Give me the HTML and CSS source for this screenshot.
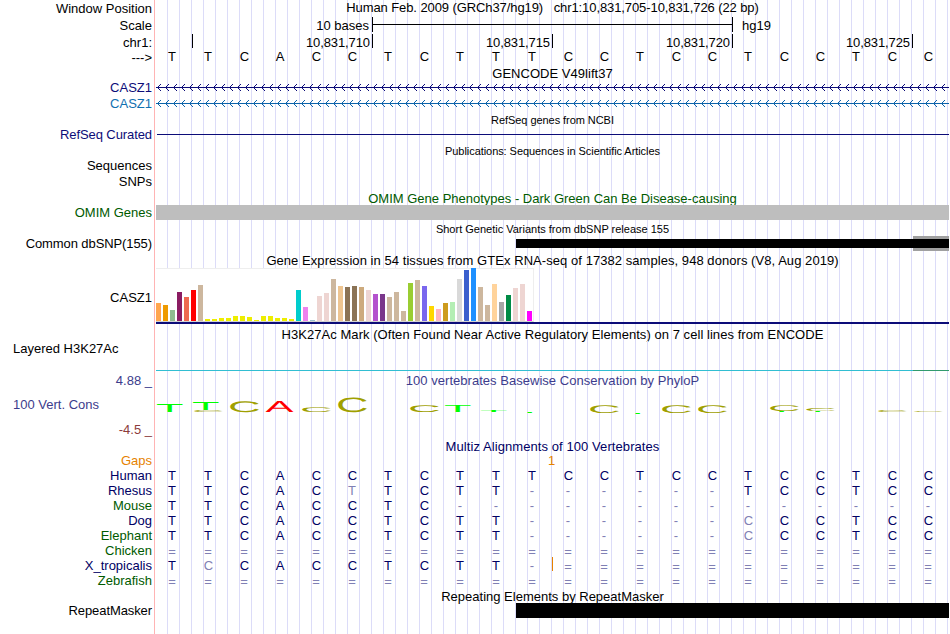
FILE: index.html
```html
<!DOCTYPE html>
<html lang="en">
<head>
<meta charset="utf-8">
<title>Genome Browser hg19 chr1:10,831,705-10,831,726</title>
<link rel="stylesheet" href="styles.css">
</head>
<body>
<main class="browser">
  <div class="row h16"><div class="label low">Window Position</div><div class="track title"><span class="t-pos">Human Feb. 2009 (GRCh37/hg19) &nbsp; chr1:10,831,705-10,831,726 (22 bp)</span></div></div>
  <div class="row h17"><div class="label low">Scale</div><div class="track scale"><span class="scale-text">10 bases</span><span class="ruler"></span><span class="assembly">hg19</span></div></div>
  <div class="row h17"><div class="label low">chr1:</div><div class="track coords"><span class="c-first"></span><span>10,831,710</span><span>10,831,715</span><span>10,831,720</span><span>10,831,725</span></div></div>
  <div class="row h16"><div class="label">---&gt;</div><div class="track seq plain" data-seq="TTCACCTCTTTCCTCCTCCTCC"></div></div>

  <div class="row h14"><div class="label"></div><div class="track title low"><span class="t-gencode">GENCODE V49lift37</span></div></div>
  <div class="row h16 gene"><div class="label">CASZ1</div><div class="track"><svg class="intron" width="793" height="16"><defs><pattern id="arrow" width="8" height="16" patternUnits="userSpaceOnUse"><path d="M1 7h1v1h-1zM2 6h1v1h-1zM2 8h1v1h-1zM3 5h1v1h-1zM3 9h1v1h-1zM4 4h1v1h-1zM4 10h1v1h-1z" fill="#0c0c78"/></pattern></defs><rect width="793" height="16" fill="url(#arrow)"/><rect y="7" width="793" height="1" fill="#0c0c78"/></svg></div></div>
  <div class="row h16 gene-alt"><div class="label">CASZ1</div><div class="track"><svg class="intron" width="793" height="16"><defs><pattern id="arrow-alt" width="8" height="16" patternUnits="userSpaceOnUse"><path d="M1 7h1v1h-1zM2 6h1v1h-1zM2 8h1v1h-1zM3 5h1v1h-1zM3 9h1v1h-1zM4 4h1v1h-1zM4 10h1v1h-1z" fill="#0c64aa"/></pattern></defs><rect width="793" height="16" fill="url(#arrow-alt)"/><rect y="7" width="793" height="1" fill="#0c64aa"/></svg></div></div>

  <div class="row h15"><div class="label"></div><div class="track title small low"><span class="t-refseq">RefSeq genes from NCBI</span></div></div>
  <div class="row h16 gene"><div class="label tight">RefSeq Curated</div><div class="track"><div class="refseq-line"></div></div></div>

  <div class="row h15"><div class="label"></div><div class="track title small low"><span class="t-pubs">Publications: Sequences in Scientific Articles</span></div></div>
  <div class="row h16"><div class="label">Sequences</div><div class="track"></div></div>
  <div class="row h16"><div class="label">SNPs</div><div class="track"></div></div>

  <div class="row h15 green"><div class="label"></div><div class="track title low"><span class="t-omim">OMIM Gene Phenotypes - Dark Green Can Be Disease-causing</span></div></div>
  <div class="row h15 green"><div class="label">OMIM Genes</div><div class="track"><div class="omim-bar"></div></div></div>

  <div class="row h16"><div class="label"></div><div class="track title small low"><span class="t-snp">Short Genetic Variants from dbSNP release 155</span></div></div>
  <div class="row h16"><div class="label tight">Common dbSNP(155)</div><div class="track snp"><div class="snp-long"></div><div class="snp-edge"><i></i></div></div></div>

  <div class="row h15"><div class="label"></div><div class="track title low"><span class="t-gtex">Gene Expression in 54 tissues from GTEx RNA-seq of 17382 samples, 948 donors (V8, Aug 2019)</span></div></div>
  <div class="row h58"><div class="label gtex-label">CASZ1</div><div class="track gtex"><div class="bars" id="bars"></div><div class="gene-line"></div></div></div>

  <div class="row h16"><div class="label"></div><div class="track title lower"><span class="t-h3k">H3K27Ac Mark (Often Found Near Active Regulatory Elements) on 7 cell lines from ENCODE</span></div></div>
  <div class="row h31"><div class="label left">Layered H3K27Ac</div><div class="track signal"><div class="signal-a"></div><div class="signal-b"></div></div></div>

  <div class="row h67 cons">
    <div class="label cons-labels"><span class="max">4.88 _</span><span class="name">100 Vert. Cons</span><span class="min">-4.5 _</span></div>
    <div class="track"><div class="title cons-title"><span class="t-phylo">100 vertebrates Basewise Conservation by PhyloP</span></div><svg class="logo" id="logo" width="793" height="50"></svg></div>
  </div>

  <div class="row h15 multiz"><div class="label"></div><div class="track title"><span class="t-multiz">Multiz Alignments of 100 Vertebrates</span></div></div>
  <div class="row h14 gaps"><div class="label">Gaps</div><div class="track"><span class="gap-count">1</span></div></div>
  <div class="row h15 multiz"><div class="label">Human</div><div class="track seq" data-seq="TTCACCTCTTTCCTCCTCCTCC"></div></div>
  <div class="row h15 multiz"><div class="label">Rhesus</div><div class="track seq" data-seq="TTCACtTCTT------TCCTCC"></div></div>
  <div class="row h15 multiz"><div class="label green">Mouse</div><div class="track seq" data-seq="TTCACCTC--------------"></div></div>
  <div class="row h15 multiz"><div class="label">Dog</div><div class="track seq" data-seq="TTCACCTCTT------cCCTCC"></div></div>
  <div class="row h15 multiz"><div class="label green">Elephant</div><div class="track seq" data-seq="TTCACCTCTT------cCCTCC"></div></div>
  <div class="row h15 multiz"><div class="label green">Chicken</div><div class="track seq" data-seq="======================"></div></div>
  <div class="row h15 multiz"><div class="label">X_tropicalis</div><div class="track seq insertion" data-seq="TcCACCTCTT-==========="></div></div>
  <div class="row h15 multiz"><div class="label green">Zebrafish</div><div class="track seq" data-seq="======================"></div></div>

  <div class="row h15"><div class="label"></div><div class="track title low"><span class="t-rmsk">Repeating Elements by RepeatMasker</span></div></div>
  <div class="row h15"><div class="label tight">RepeatMasker</div><div class="track"><div class="repeat-bar"></div></div></div>
  <div class="row h16"><div class="label"></div><div class="track"></div></div>
</main>
<script src="tracks.js"></script>
</body>
</html>
```
FILE: styles.css
```css
* { box-sizing: border-box; }
body {
  margin: 0;
  background: #fff;
  color: #000;
  font: 13px "Liberation Sans", Arial, sans-serif;
  overflow: hidden;
}
.browser { width: 949px; height: 634px; }
.row { display: grid; grid-template-columns: 155px 793px; column-gap: 1px; }
.label {
  border-right: 1px solid #ffb4b4;
  padding-right: 2px;
  text-align: right;
  white-space: pre;
}
.track {
  min-width: 0;
  background: repeating-linear-gradient(to right, transparent 0 11px, #dcdcf8 11px 12px);
}
.h14 { height: 14px; line-height: 14px; }
.h15 { height: 15px; line-height: 15px; }
.h16 { height: 16px; line-height: 16px; }
.h17 { height: 17px; line-height: 17px; }
.h31 { height: 31px; line-height: 15px; }
.h58 { height: 58px; line-height: 15px; }
.h67 { height: 67px; line-height: 15px; }

.title { display: flex; justify-content: center; white-space: nowrap; }
.small { font-size: 11px; }
.low { padding-top: 1px; }
.lower { padding-top: 2px; }
.tight { letter-spacing: -0.09px; }
.t-pos { letter-spacing: -0.09px; }
.t-refseq, .t-pubs { letter-spacing: -0.06px; }
.t-gencode, .t-phylo { letter-spacing: 0.03px; }
.t-gtex { letter-spacing: 0.055px; }
.t-h3k { letter-spacing: 0.05px; }
.t-multiz { letter-spacing: 0.08px; }

.gene { color: #0c0c78; }
.gene-alt { color: #1070b0; }
.green, .multiz .green { color: #005a00; }
.multiz { color: #000064; }
.gaps { color: #e68200; }
.cons { color: #3c3c8c; }

/* Scale bar and coordinates */
.scale { display: grid; grid-template-columns: 213px 3px 361px 9px auto; }
.scale-text, .assembly { padding-top: 1px; }
.scale-text { text-align: right; }
.ruler {
  grid-column: 3;
  height: 15px;
  margin-top: 1px;
  border: solid #000;
  border-width: 0 1px;
  background: linear-gradient(#000, #000) 0 7px / 100% 1px no-repeat;
}
.assembly { grid-column: 5; }
.coords { display: grid; grid-template-columns: 37px repeat(4, 180px); letter-spacing: -0.1px; }
.coords span {
  height: 14px;
  margin-top: 1px;
  padding-right: 2px;
  border-right: 1px solid #000;
  text-align: right;
}

/* One 36px cell per base */
.seq { display: flex; }
.seq span { flex: 0 0 36px; text-align: center; }
.seq span:first-child { margin-left: -2px; }
.seq .dim { color: #8080b4; }
.seq .wide { padding-left: 1px; }
.seq .match { padding-top: 1px; }
.plain { line-height: 14px; }
.insertion { position: relative; }
.insertion::after {
  content: "";
  position: absolute;
  left: 396px;
  top: -1px;
  width: 1px;
  height: 14px;
  background: #e68200;
}
.gap-count { display: block; margin-left: 392px; }

.intron { display: block; shape-rendering: crispEdges; }
.refseq-line { height: 1px; margin: 7px 0 0 1px; background: #0c0c78; }
.omim-bar { height: 15px; background: #bebebe; }
.snp { display: grid; grid-template-columns: 397px 36px; justify-content: end; }
.snp-long { height: 9px; margin-top: 3px; background: #000; }
.snp-edge { height: 15px; padding-top: 3px; background: #a0a0a0; }
.snp-edge i { display: block; height: 9px; background: #000; }
.repeat-bar { height: 15px; margin-left: 360px; background: #000; }

/* Tissue expression */
.gtex-label { padding-top: 23px; }
.gtex { padding-top: 1px; }
.bars {
  display: flex;
  align-items: flex-end;
  gap: 2px;
  width: 378px;
  height: 54px;
  border: solid #eee;
  border-width: 1px 1px 1px 0;
  border-bottom-color: #d2d2d2;
  background: #fff;
}
.bars i { flex: 0 0 5px; }
.gene-line { height: 2px; background: #0c0c78; }

.left { padding-left: 13px; text-align: left; }
.signal { display: grid; grid-template-columns: 757px 36px; align-items: end; padding-bottom: 1px; }
.signal-a { height: 1px; background: #32bed2; }
.signal-b { height: 1px; background: #329b6e; }
.cons-labels { display: flex; flex-direction: column; }
.max { padding-top: 1px; }
.name { padding: 9px 0 0 13px; text-align: left; }
.min { padding-top: 10px; color: #8c3c3c; }
.cons-title { height: 16px; line-height: 17px; }
.logo { display: block; }
.logo text { font: 100px "Liberation Sans", Arial, sans-serif; text-rendering: geometricPrecision; }
.A { fill: #f00; }
.C { fill: #a0a000; }
.T { fill: #0f0; }
```
FILE: tracks.js
```js
// Base letters: lower case marks a mismatch, drawn dimmed.
document.querySelectorAll('.seq').forEach(function (row) {
  row.dataset.seq.split('').forEach(function (c) {
    var cell = document.createElement('span');
    cell.textContent = c.toUpperCase();
    if (c === '=') cell.className = 'dim match';
    else if (c === 'C') cell.className = 'wide';
    else if (c === 'c') cell.className = 'dim wide';
    else if (!/[A-Z]/.test(c)) cell.className = 'dim';
    row.appendChild(cell);
  });
});

// Expression bars: colour and height in pixels.
var tissues = 'FFA54F:18 EE9A00:16 8FBC8F:11 8B1C62:29 EE6A50:24 FF0000:31 CDB79E:36 ' +
  'EEEE00:2 EEEE00:2 EEEE00:3 EEEE00:3 EEEE00:5 EEEE00:5 EEEE00:4 EEEE00:1 EEEE00:5 EEEE00:5 EEEE00:3 EEEE00:3 EEEE00:2 ' +
  '00CDCD:31 EE82EE:14 9AC0CD:1 EED5D2:25 EED5D2:28 CDB79E:42 EEC591:35 8B7355:34 8B7355:35 CDAA7D:34 ' +
  'EED5D2:31 B452CD:27 7A378B:27 CDB79E:24 CDB79E:29 CDB79E:10 9ACD32:38 CDB79E:41 7A67EE:35 FFD700:15 ' +
  'FFB6C1:12 CD9B1D:18 B4EEB4:19 D9D9D9:42 3A5FCD:51 1E90FF:53 CDB79E:34 CDB79E:16 FFD39B:37 A6A6A6:19 ' +
  '008B45:26 EED5D2:33 EED5D2:37 FF00FF:10';
var bars = document.getElementById('bars');
tissues.split(' ').forEach(function (t) {
  var bar = document.createElement('i');
  var parts = t.split(':');
  bar.style.background = '#' + parts[0];
  bar.style.height = parts[1] + 'px';
  bars.appendChild(bar);
});

// Conservation logo: base index, letter, top and bottom of the stretched glyph.
var glyphs = [
  [0, 'T', 16, 24], [1, 'T', 14, 22], [1, 'C', 22, 24], [2, 'C', 13, 24], [3, 'A', 13, 24],
  [4, 'C', 19, 24], [5, 'C', 9, 24], [7, 'C', 17, 24], [8, 'T', 17, 24], [9, 'T', 22, 24],
  [10, 'T', 24, 25], [12, 'C', 17, 25], [13, 'T', 25, 26], [14, 'C', 17, 25], [15, 'C', 17, 25],
  [17, 'C', 17, 23], [17, 'T', 23, 24], [18, 'C', 20, 23], [18, 'T', 23, 24],
  [20, 'C', 22, 24], [21, 'C', 23, 24]
];
var logo = document.getElementById('logo');
glyphs.forEach(function (g) {
  var text = document.createElementNS('http://www.w3.org/2000/svg', 'text');
  var round = g[1] === 'C';
  var sy = (g[3] - g[2]) / (round ? 72 : 69);
  var x = g[0] * 36 + (g[1] === 'A' ? 1.5 : 0);
  var y = g[3] - (round ? sy : 0);
  var sx = g[1] === 'A' ? 0.42 : 0.45;
  text.textContent = g[1];
  text.setAttribute('class', g[1]);
  text.setAttribute('transform', 'translate(' + x + ' ' + y + ') scale(' + sx + ' ' + sy + ')');
  logo.appendChild(text);
});
```
